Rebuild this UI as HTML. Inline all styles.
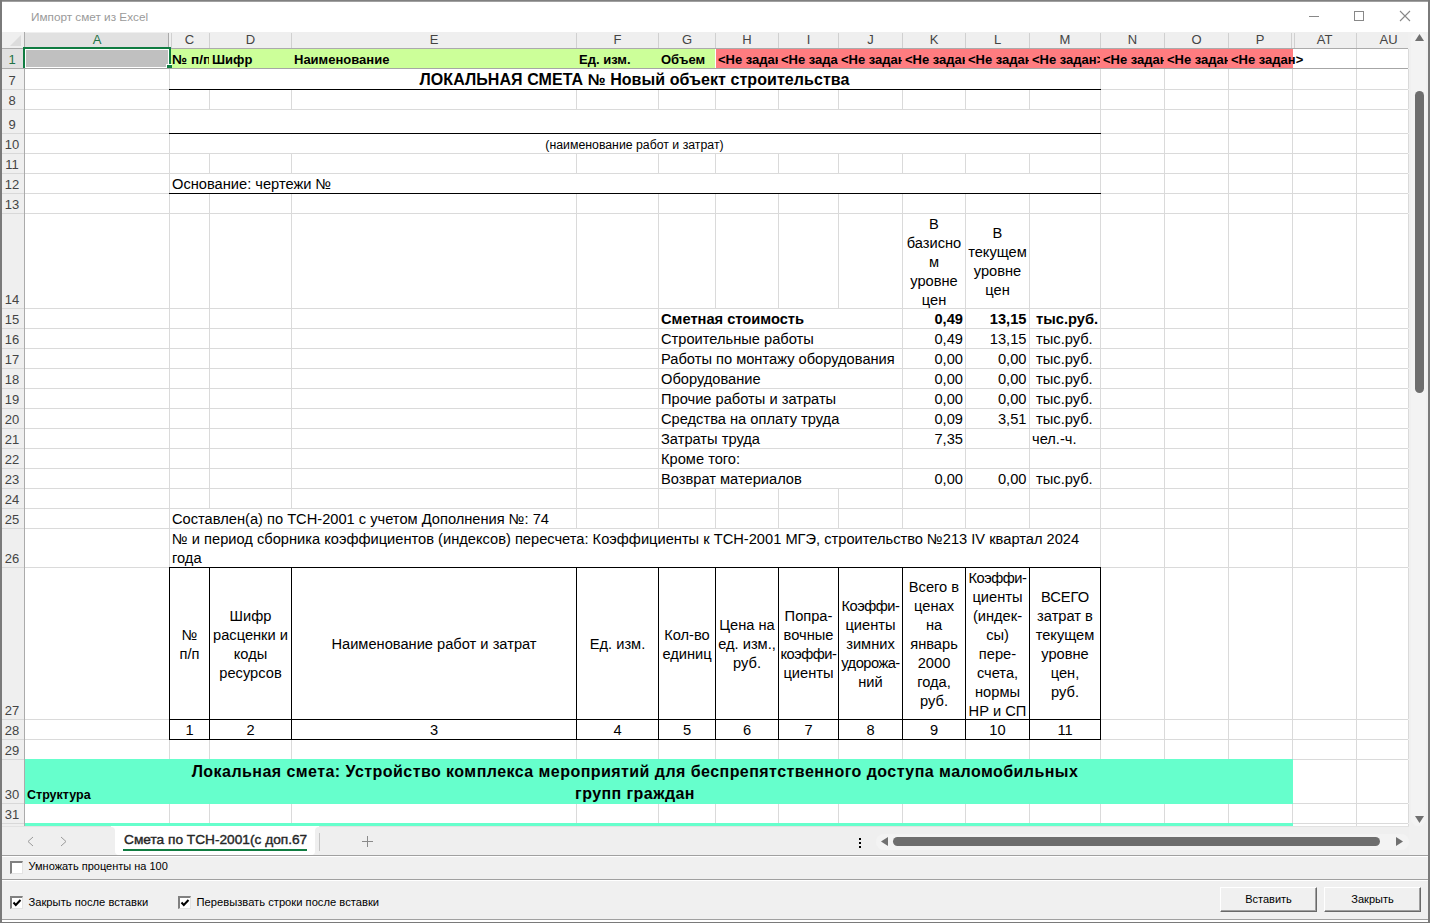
<!DOCTYPE html><html><head><meta charset="utf-8"><style>html,body{margin:0;padding:0}body{width:1430px;height:923px;position:relative;overflow:hidden;background:#f0f0f0;font-family:"Liberation Sans",sans-serif}div{position:absolute;box-sizing:border-box}</style></head><body>
<div style="left:2px;top:1px;width:1426px;height:31px;background:#ffffff;"></div>
<div style="left:24px;top:48px;width:1384px;height:778px;background:#ffffff;"></div>
<div style="left:2px;top:32px;width:1406px;height:16px;background:#efefef;"></div>
<div style="left:2px;top:48px;width:22px;height:778px;background:#efefef;"></div>
<div style="left:170px;top:49px;width:545px;height:19px;background:#ccff99;"></div>
<div style="left:716px;top:49px;width:577px;height:19px;background:#ff7c80;"></div>
<div style="left:25px;top:68px;width:1383px;height:1px;background:#a6a6a6;"></div>
<div style="left:25px;top:89px;width:1383px;height:1px;background:#dadada;"></div>
<div style="left:25px;top:109px;width:1383px;height:1px;background:#dadada;"></div>
<div style="left:25px;top:133px;width:1383px;height:1px;background:#dadada;"></div>
<div style="left:25px;top:153px;width:1383px;height:1px;background:#dadada;"></div>
<div style="left:25px;top:173px;width:1383px;height:1px;background:#dadada;"></div>
<div style="left:25px;top:193px;width:1383px;height:1px;background:#dadada;"></div>
<div style="left:25px;top:213px;width:1383px;height:1px;background:#dadada;"></div>
<div style="left:25px;top:308px;width:1383px;height:1px;background:#dadada;"></div>
<div style="left:25px;top:328px;width:1383px;height:1px;background:#dadada;"></div>
<div style="left:25px;top:348px;width:1383px;height:1px;background:#dadada;"></div>
<div style="left:25px;top:368px;width:1383px;height:1px;background:#dadada;"></div>
<div style="left:25px;top:388px;width:1383px;height:1px;background:#dadada;"></div>
<div style="left:25px;top:408px;width:1383px;height:1px;background:#dadada;"></div>
<div style="left:25px;top:428px;width:1383px;height:1px;background:#dadada;"></div>
<div style="left:25px;top:448px;width:1383px;height:1px;background:#dadada;"></div>
<div style="left:25px;top:468px;width:1383px;height:1px;background:#dadada;"></div>
<div style="left:25px;top:488px;width:1383px;height:1px;background:#dadada;"></div>
<div style="left:25px;top:508px;width:1383px;height:1px;background:#dadada;"></div>
<div style="left:25px;top:528px;width:1383px;height:1px;background:#dadada;"></div>
<div style="left:25px;top:567px;width:1383px;height:1px;background:#dadada;"></div>
<div style="left:25px;top:719px;width:1383px;height:1px;background:#dadada;"></div>
<div style="left:25px;top:739px;width:1383px;height:1px;background:#dadada;"></div>
<div style="left:25px;top:759px;width:1383px;height:1px;background:#dadada;"></div>
<div style="left:25px;top:803px;width:1383px;height:1px;background:#dadada;"></div>
<div style="left:25px;top:823px;width:1383px;height:1px;background:#dadada;"></div>
<div style="left:1356px;top:49px;width:1px;height:19px;background:#dadada;"></div>
<div style="left:1408px;top:49px;width:1px;height:19px;background:#dadada;"></div>
<div style="left:169px;top:69px;width:1px;height:20px;background:#dadada;"></div>
<div style="left:1100px;top:69px;width:1px;height:20px;background:#dadada;"></div>
<div style="left:1164px;top:69px;width:1px;height:20px;background:#dadada;"></div>
<div style="left:1228px;top:69px;width:1px;height:20px;background:#dadada;"></div>
<div style="left:1292px;top:69px;width:1px;height:20px;background:#dadada;"></div>
<div style="left:1356px;top:69px;width:1px;height:20px;background:#dadada;"></div>
<div style="left:1408px;top:69px;width:1px;height:20px;background:#dadada;"></div>
<div style="left:169px;top:90px;width:1px;height:19px;background:#dadada;"></div>
<div style="left:209px;top:90px;width:1px;height:19px;background:#dadada;"></div>
<div style="left:291px;top:90px;width:1px;height:19px;background:#dadada;"></div>
<div style="left:576px;top:90px;width:1px;height:19px;background:#dadada;"></div>
<div style="left:658px;top:90px;width:1px;height:19px;background:#dadada;"></div>
<div style="left:715px;top:90px;width:1px;height:19px;background:#dadada;"></div>
<div style="left:778px;top:90px;width:1px;height:19px;background:#dadada;"></div>
<div style="left:838px;top:90px;width:1px;height:19px;background:#dadada;"></div>
<div style="left:902px;top:90px;width:1px;height:19px;background:#dadada;"></div>
<div style="left:965px;top:90px;width:1px;height:19px;background:#dadada;"></div>
<div style="left:1029px;top:90px;width:1px;height:19px;background:#dadada;"></div>
<div style="left:1100px;top:90px;width:1px;height:19px;background:#dadada;"></div>
<div style="left:1164px;top:90px;width:1px;height:19px;background:#dadada;"></div>
<div style="left:1228px;top:90px;width:1px;height:19px;background:#dadada;"></div>
<div style="left:1292px;top:90px;width:1px;height:19px;background:#dadada;"></div>
<div style="left:1356px;top:90px;width:1px;height:19px;background:#dadada;"></div>
<div style="left:1408px;top:90px;width:1px;height:19px;background:#dadada;"></div>
<div style="left:169px;top:110px;width:1px;height:23px;background:#dadada;"></div>
<div style="left:1100px;top:110px;width:1px;height:23px;background:#dadada;"></div>
<div style="left:1164px;top:110px;width:1px;height:23px;background:#dadada;"></div>
<div style="left:1228px;top:110px;width:1px;height:23px;background:#dadada;"></div>
<div style="left:1292px;top:110px;width:1px;height:23px;background:#dadada;"></div>
<div style="left:1356px;top:110px;width:1px;height:23px;background:#dadada;"></div>
<div style="left:1408px;top:110px;width:1px;height:23px;background:#dadada;"></div>
<div style="left:169px;top:134px;width:1px;height:19px;background:#dadada;"></div>
<div style="left:1100px;top:134px;width:1px;height:19px;background:#dadada;"></div>
<div style="left:1164px;top:134px;width:1px;height:19px;background:#dadada;"></div>
<div style="left:1228px;top:134px;width:1px;height:19px;background:#dadada;"></div>
<div style="left:1292px;top:134px;width:1px;height:19px;background:#dadada;"></div>
<div style="left:1356px;top:134px;width:1px;height:19px;background:#dadada;"></div>
<div style="left:1408px;top:134px;width:1px;height:19px;background:#dadada;"></div>
<div style="left:169px;top:154px;width:1px;height:19px;background:#dadada;"></div>
<div style="left:209px;top:154px;width:1px;height:19px;background:#dadada;"></div>
<div style="left:291px;top:154px;width:1px;height:19px;background:#dadada;"></div>
<div style="left:576px;top:154px;width:1px;height:19px;background:#dadada;"></div>
<div style="left:658px;top:154px;width:1px;height:19px;background:#dadada;"></div>
<div style="left:715px;top:154px;width:1px;height:19px;background:#dadada;"></div>
<div style="left:778px;top:154px;width:1px;height:19px;background:#dadada;"></div>
<div style="left:838px;top:154px;width:1px;height:19px;background:#dadada;"></div>
<div style="left:902px;top:154px;width:1px;height:19px;background:#dadada;"></div>
<div style="left:965px;top:154px;width:1px;height:19px;background:#dadada;"></div>
<div style="left:1029px;top:154px;width:1px;height:19px;background:#dadada;"></div>
<div style="left:1100px;top:154px;width:1px;height:19px;background:#dadada;"></div>
<div style="left:1164px;top:154px;width:1px;height:19px;background:#dadada;"></div>
<div style="left:1228px;top:154px;width:1px;height:19px;background:#dadada;"></div>
<div style="left:1292px;top:154px;width:1px;height:19px;background:#dadada;"></div>
<div style="left:1356px;top:154px;width:1px;height:19px;background:#dadada;"></div>
<div style="left:1408px;top:154px;width:1px;height:19px;background:#dadada;"></div>
<div style="left:169px;top:174px;width:1px;height:19px;background:#dadada;"></div>
<div style="left:1100px;top:174px;width:1px;height:19px;background:#dadada;"></div>
<div style="left:1164px;top:174px;width:1px;height:19px;background:#dadada;"></div>
<div style="left:1228px;top:174px;width:1px;height:19px;background:#dadada;"></div>
<div style="left:1292px;top:174px;width:1px;height:19px;background:#dadada;"></div>
<div style="left:1356px;top:174px;width:1px;height:19px;background:#dadada;"></div>
<div style="left:1408px;top:174px;width:1px;height:19px;background:#dadada;"></div>
<div style="left:169px;top:194px;width:1px;height:19px;background:#dadada;"></div>
<div style="left:209px;top:194px;width:1px;height:19px;background:#dadada;"></div>
<div style="left:291px;top:194px;width:1px;height:19px;background:#dadada;"></div>
<div style="left:576px;top:194px;width:1px;height:19px;background:#dadada;"></div>
<div style="left:658px;top:194px;width:1px;height:19px;background:#dadada;"></div>
<div style="left:715px;top:194px;width:1px;height:19px;background:#dadada;"></div>
<div style="left:778px;top:194px;width:1px;height:19px;background:#dadada;"></div>
<div style="left:838px;top:194px;width:1px;height:19px;background:#dadada;"></div>
<div style="left:902px;top:194px;width:1px;height:19px;background:#dadada;"></div>
<div style="left:965px;top:194px;width:1px;height:19px;background:#dadada;"></div>
<div style="left:1029px;top:194px;width:1px;height:19px;background:#dadada;"></div>
<div style="left:1100px;top:194px;width:1px;height:19px;background:#dadada;"></div>
<div style="left:1164px;top:194px;width:1px;height:19px;background:#dadada;"></div>
<div style="left:1228px;top:194px;width:1px;height:19px;background:#dadada;"></div>
<div style="left:1292px;top:194px;width:1px;height:19px;background:#dadada;"></div>
<div style="left:1356px;top:194px;width:1px;height:19px;background:#dadada;"></div>
<div style="left:1408px;top:194px;width:1px;height:19px;background:#dadada;"></div>
<div style="left:169px;top:214px;width:1px;height:94px;background:#dadada;"></div>
<div style="left:209px;top:214px;width:1px;height:94px;background:#dadada;"></div>
<div style="left:291px;top:214px;width:1px;height:94px;background:#dadada;"></div>
<div style="left:576px;top:214px;width:1px;height:94px;background:#dadada;"></div>
<div style="left:658px;top:214px;width:1px;height:94px;background:#dadada;"></div>
<div style="left:715px;top:214px;width:1px;height:94px;background:#dadada;"></div>
<div style="left:778px;top:214px;width:1px;height:94px;background:#dadada;"></div>
<div style="left:838px;top:214px;width:1px;height:94px;background:#dadada;"></div>
<div style="left:902px;top:214px;width:1px;height:94px;background:#dadada;"></div>
<div style="left:965px;top:214px;width:1px;height:94px;background:#dadada;"></div>
<div style="left:1029px;top:214px;width:1px;height:94px;background:#dadada;"></div>
<div style="left:1100px;top:214px;width:1px;height:94px;background:#dadada;"></div>
<div style="left:1164px;top:214px;width:1px;height:94px;background:#dadada;"></div>
<div style="left:1228px;top:214px;width:1px;height:94px;background:#dadada;"></div>
<div style="left:1292px;top:214px;width:1px;height:94px;background:#dadada;"></div>
<div style="left:1356px;top:214px;width:1px;height:94px;background:#dadada;"></div>
<div style="left:1408px;top:214px;width:1px;height:94px;background:#dadada;"></div>
<div style="left:169px;top:309px;width:1px;height:19px;background:#dadada;"></div>
<div style="left:209px;top:309px;width:1px;height:19px;background:#dadada;"></div>
<div style="left:291px;top:309px;width:1px;height:19px;background:#dadada;"></div>
<div style="left:576px;top:309px;width:1px;height:19px;background:#dadada;"></div>
<div style="left:658px;top:309px;width:1px;height:19px;background:#dadada;"></div>
<div style="left:902px;top:309px;width:1px;height:19px;background:#dadada;"></div>
<div style="left:965px;top:309px;width:1px;height:19px;background:#dadada;"></div>
<div style="left:1029px;top:309px;width:1px;height:19px;background:#dadada;"></div>
<div style="left:1100px;top:309px;width:1px;height:19px;background:#dadada;"></div>
<div style="left:1164px;top:309px;width:1px;height:19px;background:#dadada;"></div>
<div style="left:1228px;top:309px;width:1px;height:19px;background:#dadada;"></div>
<div style="left:1292px;top:309px;width:1px;height:19px;background:#dadada;"></div>
<div style="left:1356px;top:309px;width:1px;height:19px;background:#dadada;"></div>
<div style="left:1408px;top:309px;width:1px;height:19px;background:#dadada;"></div>
<div style="left:169px;top:329px;width:1px;height:19px;background:#dadada;"></div>
<div style="left:209px;top:329px;width:1px;height:19px;background:#dadada;"></div>
<div style="left:291px;top:329px;width:1px;height:19px;background:#dadada;"></div>
<div style="left:576px;top:329px;width:1px;height:19px;background:#dadada;"></div>
<div style="left:658px;top:329px;width:1px;height:19px;background:#dadada;"></div>
<div style="left:902px;top:329px;width:1px;height:19px;background:#dadada;"></div>
<div style="left:965px;top:329px;width:1px;height:19px;background:#dadada;"></div>
<div style="left:1029px;top:329px;width:1px;height:19px;background:#dadada;"></div>
<div style="left:1100px;top:329px;width:1px;height:19px;background:#dadada;"></div>
<div style="left:1164px;top:329px;width:1px;height:19px;background:#dadada;"></div>
<div style="left:1228px;top:329px;width:1px;height:19px;background:#dadada;"></div>
<div style="left:1292px;top:329px;width:1px;height:19px;background:#dadada;"></div>
<div style="left:1356px;top:329px;width:1px;height:19px;background:#dadada;"></div>
<div style="left:1408px;top:329px;width:1px;height:19px;background:#dadada;"></div>
<div style="left:169px;top:349px;width:1px;height:19px;background:#dadada;"></div>
<div style="left:209px;top:349px;width:1px;height:19px;background:#dadada;"></div>
<div style="left:291px;top:349px;width:1px;height:19px;background:#dadada;"></div>
<div style="left:576px;top:349px;width:1px;height:19px;background:#dadada;"></div>
<div style="left:658px;top:349px;width:1px;height:19px;background:#dadada;"></div>
<div style="left:902px;top:349px;width:1px;height:19px;background:#dadada;"></div>
<div style="left:965px;top:349px;width:1px;height:19px;background:#dadada;"></div>
<div style="left:1029px;top:349px;width:1px;height:19px;background:#dadada;"></div>
<div style="left:1100px;top:349px;width:1px;height:19px;background:#dadada;"></div>
<div style="left:1164px;top:349px;width:1px;height:19px;background:#dadada;"></div>
<div style="left:1228px;top:349px;width:1px;height:19px;background:#dadada;"></div>
<div style="left:1292px;top:349px;width:1px;height:19px;background:#dadada;"></div>
<div style="left:1356px;top:349px;width:1px;height:19px;background:#dadada;"></div>
<div style="left:1408px;top:349px;width:1px;height:19px;background:#dadada;"></div>
<div style="left:169px;top:369px;width:1px;height:19px;background:#dadada;"></div>
<div style="left:209px;top:369px;width:1px;height:19px;background:#dadada;"></div>
<div style="left:291px;top:369px;width:1px;height:19px;background:#dadada;"></div>
<div style="left:576px;top:369px;width:1px;height:19px;background:#dadada;"></div>
<div style="left:658px;top:369px;width:1px;height:19px;background:#dadada;"></div>
<div style="left:902px;top:369px;width:1px;height:19px;background:#dadada;"></div>
<div style="left:965px;top:369px;width:1px;height:19px;background:#dadada;"></div>
<div style="left:1029px;top:369px;width:1px;height:19px;background:#dadada;"></div>
<div style="left:1100px;top:369px;width:1px;height:19px;background:#dadada;"></div>
<div style="left:1164px;top:369px;width:1px;height:19px;background:#dadada;"></div>
<div style="left:1228px;top:369px;width:1px;height:19px;background:#dadada;"></div>
<div style="left:1292px;top:369px;width:1px;height:19px;background:#dadada;"></div>
<div style="left:1356px;top:369px;width:1px;height:19px;background:#dadada;"></div>
<div style="left:1408px;top:369px;width:1px;height:19px;background:#dadada;"></div>
<div style="left:169px;top:389px;width:1px;height:19px;background:#dadada;"></div>
<div style="left:209px;top:389px;width:1px;height:19px;background:#dadada;"></div>
<div style="left:291px;top:389px;width:1px;height:19px;background:#dadada;"></div>
<div style="left:576px;top:389px;width:1px;height:19px;background:#dadada;"></div>
<div style="left:658px;top:389px;width:1px;height:19px;background:#dadada;"></div>
<div style="left:902px;top:389px;width:1px;height:19px;background:#dadada;"></div>
<div style="left:965px;top:389px;width:1px;height:19px;background:#dadada;"></div>
<div style="left:1029px;top:389px;width:1px;height:19px;background:#dadada;"></div>
<div style="left:1100px;top:389px;width:1px;height:19px;background:#dadada;"></div>
<div style="left:1164px;top:389px;width:1px;height:19px;background:#dadada;"></div>
<div style="left:1228px;top:389px;width:1px;height:19px;background:#dadada;"></div>
<div style="left:1292px;top:389px;width:1px;height:19px;background:#dadada;"></div>
<div style="left:1356px;top:389px;width:1px;height:19px;background:#dadada;"></div>
<div style="left:1408px;top:389px;width:1px;height:19px;background:#dadada;"></div>
<div style="left:169px;top:409px;width:1px;height:19px;background:#dadada;"></div>
<div style="left:209px;top:409px;width:1px;height:19px;background:#dadada;"></div>
<div style="left:291px;top:409px;width:1px;height:19px;background:#dadada;"></div>
<div style="left:576px;top:409px;width:1px;height:19px;background:#dadada;"></div>
<div style="left:658px;top:409px;width:1px;height:19px;background:#dadada;"></div>
<div style="left:902px;top:409px;width:1px;height:19px;background:#dadada;"></div>
<div style="left:965px;top:409px;width:1px;height:19px;background:#dadada;"></div>
<div style="left:1029px;top:409px;width:1px;height:19px;background:#dadada;"></div>
<div style="left:1100px;top:409px;width:1px;height:19px;background:#dadada;"></div>
<div style="left:1164px;top:409px;width:1px;height:19px;background:#dadada;"></div>
<div style="left:1228px;top:409px;width:1px;height:19px;background:#dadada;"></div>
<div style="left:1292px;top:409px;width:1px;height:19px;background:#dadada;"></div>
<div style="left:1356px;top:409px;width:1px;height:19px;background:#dadada;"></div>
<div style="left:1408px;top:409px;width:1px;height:19px;background:#dadada;"></div>
<div style="left:169px;top:429px;width:1px;height:19px;background:#dadada;"></div>
<div style="left:209px;top:429px;width:1px;height:19px;background:#dadada;"></div>
<div style="left:291px;top:429px;width:1px;height:19px;background:#dadada;"></div>
<div style="left:576px;top:429px;width:1px;height:19px;background:#dadada;"></div>
<div style="left:658px;top:429px;width:1px;height:19px;background:#dadada;"></div>
<div style="left:902px;top:429px;width:1px;height:19px;background:#dadada;"></div>
<div style="left:965px;top:429px;width:1px;height:19px;background:#dadada;"></div>
<div style="left:1029px;top:429px;width:1px;height:19px;background:#dadada;"></div>
<div style="left:1100px;top:429px;width:1px;height:19px;background:#dadada;"></div>
<div style="left:1164px;top:429px;width:1px;height:19px;background:#dadada;"></div>
<div style="left:1228px;top:429px;width:1px;height:19px;background:#dadada;"></div>
<div style="left:1292px;top:429px;width:1px;height:19px;background:#dadada;"></div>
<div style="left:1356px;top:429px;width:1px;height:19px;background:#dadada;"></div>
<div style="left:1408px;top:429px;width:1px;height:19px;background:#dadada;"></div>
<div style="left:169px;top:449px;width:1px;height:19px;background:#dadada;"></div>
<div style="left:209px;top:449px;width:1px;height:19px;background:#dadada;"></div>
<div style="left:291px;top:449px;width:1px;height:19px;background:#dadada;"></div>
<div style="left:576px;top:449px;width:1px;height:19px;background:#dadada;"></div>
<div style="left:658px;top:449px;width:1px;height:19px;background:#dadada;"></div>
<div style="left:902px;top:449px;width:1px;height:19px;background:#dadada;"></div>
<div style="left:965px;top:449px;width:1px;height:19px;background:#dadada;"></div>
<div style="left:1029px;top:449px;width:1px;height:19px;background:#dadada;"></div>
<div style="left:1100px;top:449px;width:1px;height:19px;background:#dadada;"></div>
<div style="left:1164px;top:449px;width:1px;height:19px;background:#dadada;"></div>
<div style="left:1228px;top:449px;width:1px;height:19px;background:#dadada;"></div>
<div style="left:1292px;top:449px;width:1px;height:19px;background:#dadada;"></div>
<div style="left:1356px;top:449px;width:1px;height:19px;background:#dadada;"></div>
<div style="left:1408px;top:449px;width:1px;height:19px;background:#dadada;"></div>
<div style="left:169px;top:469px;width:1px;height:19px;background:#dadada;"></div>
<div style="left:209px;top:469px;width:1px;height:19px;background:#dadada;"></div>
<div style="left:291px;top:469px;width:1px;height:19px;background:#dadada;"></div>
<div style="left:576px;top:469px;width:1px;height:19px;background:#dadada;"></div>
<div style="left:658px;top:469px;width:1px;height:19px;background:#dadada;"></div>
<div style="left:902px;top:469px;width:1px;height:19px;background:#dadada;"></div>
<div style="left:965px;top:469px;width:1px;height:19px;background:#dadada;"></div>
<div style="left:1029px;top:469px;width:1px;height:19px;background:#dadada;"></div>
<div style="left:1100px;top:469px;width:1px;height:19px;background:#dadada;"></div>
<div style="left:1164px;top:469px;width:1px;height:19px;background:#dadada;"></div>
<div style="left:1228px;top:469px;width:1px;height:19px;background:#dadada;"></div>
<div style="left:1292px;top:469px;width:1px;height:19px;background:#dadada;"></div>
<div style="left:1356px;top:469px;width:1px;height:19px;background:#dadada;"></div>
<div style="left:1408px;top:469px;width:1px;height:19px;background:#dadada;"></div>
<div style="left:169px;top:489px;width:1px;height:19px;background:#dadada;"></div>
<div style="left:209px;top:489px;width:1px;height:19px;background:#dadada;"></div>
<div style="left:291px;top:489px;width:1px;height:19px;background:#dadada;"></div>
<div style="left:576px;top:489px;width:1px;height:19px;background:#dadada;"></div>
<div style="left:658px;top:489px;width:1px;height:19px;background:#dadada;"></div>
<div style="left:715px;top:489px;width:1px;height:19px;background:#dadada;"></div>
<div style="left:778px;top:489px;width:1px;height:19px;background:#dadada;"></div>
<div style="left:838px;top:489px;width:1px;height:19px;background:#dadada;"></div>
<div style="left:902px;top:489px;width:1px;height:19px;background:#dadada;"></div>
<div style="left:965px;top:489px;width:1px;height:19px;background:#dadada;"></div>
<div style="left:1029px;top:489px;width:1px;height:19px;background:#dadada;"></div>
<div style="left:1100px;top:489px;width:1px;height:19px;background:#dadada;"></div>
<div style="left:1164px;top:489px;width:1px;height:19px;background:#dadada;"></div>
<div style="left:1228px;top:489px;width:1px;height:19px;background:#dadada;"></div>
<div style="left:1292px;top:489px;width:1px;height:19px;background:#dadada;"></div>
<div style="left:1356px;top:489px;width:1px;height:19px;background:#dadada;"></div>
<div style="left:1408px;top:489px;width:1px;height:19px;background:#dadada;"></div>
<div style="left:169px;top:509px;width:1px;height:19px;background:#dadada;"></div>
<div style="left:576px;top:509px;width:1px;height:19px;background:#dadada;"></div>
<div style="left:658px;top:509px;width:1px;height:19px;background:#dadada;"></div>
<div style="left:715px;top:509px;width:1px;height:19px;background:#dadada;"></div>
<div style="left:778px;top:509px;width:1px;height:19px;background:#dadada;"></div>
<div style="left:838px;top:509px;width:1px;height:19px;background:#dadada;"></div>
<div style="left:902px;top:509px;width:1px;height:19px;background:#dadada;"></div>
<div style="left:965px;top:509px;width:1px;height:19px;background:#dadada;"></div>
<div style="left:1029px;top:509px;width:1px;height:19px;background:#dadada;"></div>
<div style="left:1100px;top:509px;width:1px;height:19px;background:#dadada;"></div>
<div style="left:1164px;top:509px;width:1px;height:19px;background:#dadada;"></div>
<div style="left:1228px;top:509px;width:1px;height:19px;background:#dadada;"></div>
<div style="left:1292px;top:509px;width:1px;height:19px;background:#dadada;"></div>
<div style="left:1356px;top:509px;width:1px;height:19px;background:#dadada;"></div>
<div style="left:1408px;top:509px;width:1px;height:19px;background:#dadada;"></div>
<div style="left:169px;top:529px;width:1px;height:38px;background:#dadada;"></div>
<div style="left:1100px;top:529px;width:1px;height:38px;background:#dadada;"></div>
<div style="left:1164px;top:529px;width:1px;height:38px;background:#dadada;"></div>
<div style="left:1228px;top:529px;width:1px;height:38px;background:#dadada;"></div>
<div style="left:1292px;top:529px;width:1px;height:38px;background:#dadada;"></div>
<div style="left:1356px;top:529px;width:1px;height:38px;background:#dadada;"></div>
<div style="left:1408px;top:529px;width:1px;height:38px;background:#dadada;"></div>
<div style="left:169px;top:568px;width:1px;height:151px;background:#dadada;"></div>
<div style="left:209px;top:568px;width:1px;height:151px;background:#dadada;"></div>
<div style="left:291px;top:568px;width:1px;height:151px;background:#dadada;"></div>
<div style="left:576px;top:568px;width:1px;height:151px;background:#dadada;"></div>
<div style="left:658px;top:568px;width:1px;height:151px;background:#dadada;"></div>
<div style="left:715px;top:568px;width:1px;height:151px;background:#dadada;"></div>
<div style="left:778px;top:568px;width:1px;height:151px;background:#dadada;"></div>
<div style="left:838px;top:568px;width:1px;height:151px;background:#dadada;"></div>
<div style="left:902px;top:568px;width:1px;height:151px;background:#dadada;"></div>
<div style="left:965px;top:568px;width:1px;height:151px;background:#dadada;"></div>
<div style="left:1029px;top:568px;width:1px;height:151px;background:#dadada;"></div>
<div style="left:1100px;top:568px;width:1px;height:151px;background:#dadada;"></div>
<div style="left:1164px;top:568px;width:1px;height:151px;background:#dadada;"></div>
<div style="left:1228px;top:568px;width:1px;height:151px;background:#dadada;"></div>
<div style="left:1292px;top:568px;width:1px;height:151px;background:#dadada;"></div>
<div style="left:1356px;top:568px;width:1px;height:151px;background:#dadada;"></div>
<div style="left:1408px;top:568px;width:1px;height:151px;background:#dadada;"></div>
<div style="left:169px;top:720px;width:1px;height:19px;background:#dadada;"></div>
<div style="left:209px;top:720px;width:1px;height:19px;background:#dadada;"></div>
<div style="left:291px;top:720px;width:1px;height:19px;background:#dadada;"></div>
<div style="left:576px;top:720px;width:1px;height:19px;background:#dadada;"></div>
<div style="left:658px;top:720px;width:1px;height:19px;background:#dadada;"></div>
<div style="left:715px;top:720px;width:1px;height:19px;background:#dadada;"></div>
<div style="left:778px;top:720px;width:1px;height:19px;background:#dadada;"></div>
<div style="left:838px;top:720px;width:1px;height:19px;background:#dadada;"></div>
<div style="left:902px;top:720px;width:1px;height:19px;background:#dadada;"></div>
<div style="left:965px;top:720px;width:1px;height:19px;background:#dadada;"></div>
<div style="left:1029px;top:720px;width:1px;height:19px;background:#dadada;"></div>
<div style="left:1100px;top:720px;width:1px;height:19px;background:#dadada;"></div>
<div style="left:1164px;top:720px;width:1px;height:19px;background:#dadada;"></div>
<div style="left:1228px;top:720px;width:1px;height:19px;background:#dadada;"></div>
<div style="left:1292px;top:720px;width:1px;height:19px;background:#dadada;"></div>
<div style="left:1356px;top:720px;width:1px;height:19px;background:#dadada;"></div>
<div style="left:1408px;top:720px;width:1px;height:19px;background:#dadada;"></div>
<div style="left:169px;top:740px;width:1px;height:19px;background:#dadada;"></div>
<div style="left:209px;top:740px;width:1px;height:19px;background:#dadada;"></div>
<div style="left:291px;top:740px;width:1px;height:19px;background:#dadada;"></div>
<div style="left:576px;top:740px;width:1px;height:19px;background:#dadada;"></div>
<div style="left:658px;top:740px;width:1px;height:19px;background:#dadada;"></div>
<div style="left:715px;top:740px;width:1px;height:19px;background:#dadada;"></div>
<div style="left:778px;top:740px;width:1px;height:19px;background:#dadada;"></div>
<div style="left:838px;top:740px;width:1px;height:19px;background:#dadada;"></div>
<div style="left:902px;top:740px;width:1px;height:19px;background:#dadada;"></div>
<div style="left:965px;top:740px;width:1px;height:19px;background:#dadada;"></div>
<div style="left:1029px;top:740px;width:1px;height:19px;background:#dadada;"></div>
<div style="left:1100px;top:740px;width:1px;height:19px;background:#dadada;"></div>
<div style="left:1164px;top:740px;width:1px;height:19px;background:#dadada;"></div>
<div style="left:1228px;top:740px;width:1px;height:19px;background:#dadada;"></div>
<div style="left:1292px;top:740px;width:1px;height:19px;background:#dadada;"></div>
<div style="left:1356px;top:740px;width:1px;height:19px;background:#dadada;"></div>
<div style="left:1408px;top:740px;width:1px;height:19px;background:#dadada;"></div>
<div style="left:1356px;top:760px;width:1px;height:43px;background:#dadada;"></div>
<div style="left:1408px;top:760px;width:1px;height:43px;background:#dadada;"></div>
<div style="left:169px;top:804px;width:1px;height:19px;background:#dadada;"></div>
<div style="left:209px;top:804px;width:1px;height:19px;background:#dadada;"></div>
<div style="left:291px;top:804px;width:1px;height:19px;background:#dadada;"></div>
<div style="left:576px;top:804px;width:1px;height:19px;background:#dadada;"></div>
<div style="left:658px;top:804px;width:1px;height:19px;background:#dadada;"></div>
<div style="left:715px;top:804px;width:1px;height:19px;background:#dadada;"></div>
<div style="left:778px;top:804px;width:1px;height:19px;background:#dadada;"></div>
<div style="left:838px;top:804px;width:1px;height:19px;background:#dadada;"></div>
<div style="left:902px;top:804px;width:1px;height:19px;background:#dadada;"></div>
<div style="left:965px;top:804px;width:1px;height:19px;background:#dadada;"></div>
<div style="left:1029px;top:804px;width:1px;height:19px;background:#dadada;"></div>
<div style="left:1100px;top:804px;width:1px;height:19px;background:#dadada;"></div>
<div style="left:1164px;top:804px;width:1px;height:19px;background:#dadada;"></div>
<div style="left:1228px;top:804px;width:1px;height:19px;background:#dadada;"></div>
<div style="left:1292px;top:804px;width:1px;height:19px;background:#dadada;"></div>
<div style="left:1356px;top:804px;width:1px;height:19px;background:#dadada;"></div>
<div style="left:1408px;top:804px;width:1px;height:19px;background:#dadada;"></div>
<div style="left:169px;top:824px;width:1px;height:2px;background:#dadada;"></div>
<div style="left:209px;top:824px;width:1px;height:2px;background:#dadada;"></div>
<div style="left:291px;top:824px;width:1px;height:2px;background:#dadada;"></div>
<div style="left:576px;top:824px;width:1px;height:2px;background:#dadada;"></div>
<div style="left:658px;top:824px;width:1px;height:2px;background:#dadada;"></div>
<div style="left:715px;top:824px;width:1px;height:2px;background:#dadada;"></div>
<div style="left:778px;top:824px;width:1px;height:2px;background:#dadada;"></div>
<div style="left:838px;top:824px;width:1px;height:2px;background:#dadada;"></div>
<div style="left:902px;top:824px;width:1px;height:2px;background:#dadada;"></div>
<div style="left:965px;top:824px;width:1px;height:2px;background:#dadada;"></div>
<div style="left:1029px;top:824px;width:1px;height:2px;background:#dadada;"></div>
<div style="left:1100px;top:824px;width:1px;height:2px;background:#dadada;"></div>
<div style="left:1164px;top:824px;width:1px;height:2px;background:#dadada;"></div>
<div style="left:1228px;top:824px;width:1px;height:2px;background:#dadada;"></div>
<div style="left:1292px;top:824px;width:1px;height:2px;background:#dadada;"></div>
<div style="left:1356px;top:824px;width:1px;height:2px;background:#dadada;"></div>
<div style="left:1408px;top:824px;width:1px;height:2px;background:#dadada;"></div>
<div style="left:25px;top:759px;width:1268px;height:45px;background:#66ffcc;"></div>
<div style="left:25px;top:823px;width:1268px;height:3px;background:#66ffcc;"></div>
<div style="left:2px;top:826px;width:1407px;height:1px;background:#e2e2e2;"></div>
<div style="left:169px;top:89px;width:932px;height:1px;background:#000;"></div>
<div style="left:169px;top:133px;width:932px;height:1px;background:#000;"></div>
<div style="left:169px;top:193px;width:932px;height:1px;background:#000;"></div>
<div style="left:169px;top:567px;width:932px;height:1px;background:#000;"></div>
<div style="left:169px;top:719px;width:932px;height:1px;background:#000;"></div>
<div style="left:169px;top:739px;width:932px;height:1px;background:#000;"></div>
<div style="left:169px;top:567px;width:1px;height:173px;background:#000;"></div>
<div style="left:209px;top:567px;width:1px;height:173px;background:#000;"></div>
<div style="left:291px;top:567px;width:1px;height:173px;background:#000;"></div>
<div style="left:576px;top:567px;width:1px;height:173px;background:#000;"></div>
<div style="left:658px;top:567px;width:1px;height:173px;background:#000;"></div>
<div style="left:715px;top:567px;width:1px;height:173px;background:#000;"></div>
<div style="left:778px;top:567px;width:1px;height:173px;background:#000;"></div>
<div style="left:838px;top:567px;width:1px;height:173px;background:#000;"></div>
<div style="left:902px;top:567px;width:1px;height:173px;background:#000;"></div>
<div style="left:965px;top:567px;width:1px;height:173px;background:#000;"></div>
<div style="left:1029px;top:567px;width:1px;height:173px;background:#000;"></div>
<div style="left:1100px;top:567px;width:1px;height:173px;background:#000;"></div>
<div style="left:168px;top:33px;width:1px;height:15px;background:#d0d0d0;"></div>
<div style="left:171px;top:33px;width:1px;height:15px;background:#d0d0d0;"></div>
<div style="left:209px;top:33px;width:1px;height:15px;background:#d0d0d0;"></div>
<div style="left:291px;top:33px;width:1px;height:15px;background:#d0d0d0;"></div>
<div style="left:576px;top:33px;width:1px;height:15px;background:#d0d0d0;"></div>
<div style="left:658px;top:33px;width:1px;height:15px;background:#d0d0d0;"></div>
<div style="left:715px;top:33px;width:1px;height:15px;background:#d0d0d0;"></div>
<div style="left:778px;top:33px;width:1px;height:15px;background:#d0d0d0;"></div>
<div style="left:838px;top:33px;width:1px;height:15px;background:#d0d0d0;"></div>
<div style="left:902px;top:33px;width:1px;height:15px;background:#d0d0d0;"></div>
<div style="left:965px;top:33px;width:1px;height:15px;background:#d0d0d0;"></div>
<div style="left:1029px;top:33px;width:1px;height:15px;background:#d0d0d0;"></div>
<div style="left:1100px;top:33px;width:1px;height:15px;background:#d0d0d0;"></div>
<div style="left:1164px;top:33px;width:1px;height:15px;background:#d0d0d0;"></div>
<div style="left:1228px;top:33px;width:1px;height:15px;background:#d0d0d0;"></div>
<div style="left:1291px;top:33px;width:1px;height:15px;background:#d0d0d0;"></div>
<div style="left:1294px;top:33px;width:1px;height:15px;background:#d0d0d0;"></div>
<div style="left:1356px;top:33px;width:1px;height:15px;background:#d0d0d0;"></div>
<div style="left:25px;top:33px;width:143px;height:15px;background:#e1e1e1;"></div>
<div style="left:168px;top:33px;width:1px;height:15px;background:#a8a8a8;"></div>
<div style="left:2px;top:48px;width:1406px;height:1px;background:#ababab;"></div>
<div style="left:24px;top:32px;width:1px;height:794px;background:#ababab;"></div>
<svg style="position:absolute;left:8px;top:34px" width="14" height="13"><polygon points="13,1 13,12 2,12" fill="#dcdcdc"/></svg>
<div style="top:32.00px;font-size:13px;line-height:15px;color:#217346;white-space:pre;left:-403.0px;width:1000px;text-align:center;">A</div>
<div style="top:32.00px;font-size:13px;line-height:15px;color:#444444;white-space:pre;left:-310.5px;width:1000px;text-align:center;">C</div>
<div style="top:32.00px;font-size:13px;line-height:15px;color:#444444;white-space:pre;left:-249.5px;width:1000px;text-align:center;">D</div>
<div style="top:32.00px;font-size:13px;line-height:15px;color:#444444;white-space:pre;left:-66.0px;width:1000px;text-align:center;">E</div>
<div style="top:32.00px;font-size:13px;line-height:15px;color:#444444;white-space:pre;left:117.5px;width:1000px;text-align:center;">F</div>
<div style="top:32.00px;font-size:13px;line-height:15px;color:#444444;white-space:pre;left:187.0px;width:1000px;text-align:center;">G</div>
<div style="top:32.00px;font-size:13px;line-height:15px;color:#444444;white-space:pre;left:247.0px;width:1000px;text-align:center;">H</div>
<div style="top:32.00px;font-size:13px;line-height:15px;color:#444444;white-space:pre;left:308.5px;width:1000px;text-align:center;">I</div>
<div style="top:32.00px;font-size:13px;line-height:15px;color:#444444;white-space:pre;left:370.5px;width:1000px;text-align:center;">J</div>
<div style="top:32.00px;font-size:13px;line-height:15px;color:#444444;white-space:pre;left:434.0px;width:1000px;text-align:center;">K</div>
<div style="top:32.00px;font-size:13px;line-height:15px;color:#444444;white-space:pre;left:497.5px;width:1000px;text-align:center;">L</div>
<div style="top:32.00px;font-size:13px;line-height:15px;color:#444444;white-space:pre;left:565.0px;width:1000px;text-align:center;">M</div>
<div style="top:32.00px;font-size:13px;line-height:15px;color:#444444;white-space:pre;left:632.5px;width:1000px;text-align:center;">N</div>
<div style="top:32.00px;font-size:13px;line-height:15px;color:#444444;white-space:pre;left:696.5px;width:1000px;text-align:center;">O</div>
<div style="top:32.00px;font-size:13px;line-height:15px;color:#444444;white-space:pre;left:760.0px;width:1000px;text-align:center;">P</div>
<div style="top:32.00px;font-size:13px;line-height:15px;color:#444444;white-space:pre;left:824.5px;width:1000px;text-align:center;">AT</div>
<div style="top:32.00px;font-size:13px;line-height:15px;color:#444444;white-space:pre;left:888.5px;width:1000px;text-align:center;">AU</div>
<div style="left:2px;top:49px;width:22px;height:19px;background:#e1e1e1;"></div>
<div style="left:2px;top:68px;width:22px;height:1px;background:#ababab;"></div>
<div style="top:52.00px;font-size:13px;line-height:15px;color:#217346;white-space:pre;left:-488px;width:1000px;text-align:center;">1</div>
<div style="left:2px;top:89px;width:22px;height:1px;background:#d8d8d8;"></div>
<div style="top:73.00px;font-size:13px;line-height:15px;color:#444444;white-space:pre;left:-488px;width:1000px;text-align:center;">7</div>
<div style="left:2px;top:109px;width:22px;height:1px;background:#d8d8d8;"></div>
<div style="top:93.00px;font-size:13px;line-height:15px;color:#444444;white-space:pre;left:-488px;width:1000px;text-align:center;">8</div>
<div style="left:2px;top:133px;width:22px;height:1px;background:#d8d8d8;"></div>
<div style="top:117.00px;font-size:13px;line-height:15px;color:#444444;white-space:pre;left:-488px;width:1000px;text-align:center;">9</div>
<div style="left:2px;top:153px;width:22px;height:1px;background:#d8d8d8;"></div>
<div style="top:137.00px;font-size:13px;line-height:15px;color:#444444;white-space:pre;left:-488px;width:1000px;text-align:center;">10</div>
<div style="left:2px;top:173px;width:22px;height:1px;background:#d8d8d8;"></div>
<div style="top:157.00px;font-size:13px;line-height:15px;color:#444444;white-space:pre;left:-488px;width:1000px;text-align:center;">11</div>
<div style="left:2px;top:193px;width:22px;height:1px;background:#d8d8d8;"></div>
<div style="top:177.00px;font-size:13px;line-height:15px;color:#444444;white-space:pre;left:-488px;width:1000px;text-align:center;">12</div>
<div style="left:2px;top:213px;width:22px;height:1px;background:#d8d8d8;"></div>
<div style="top:197.00px;font-size:13px;line-height:15px;color:#444444;white-space:pre;left:-488px;width:1000px;text-align:center;">13</div>
<div style="left:2px;top:308px;width:22px;height:1px;background:#d8d8d8;"></div>
<div style="top:292.00px;font-size:13px;line-height:15px;color:#444444;white-space:pre;left:-488px;width:1000px;text-align:center;">14</div>
<div style="left:2px;top:328px;width:22px;height:1px;background:#d8d8d8;"></div>
<div style="top:312.00px;font-size:13px;line-height:15px;color:#444444;white-space:pre;left:-488px;width:1000px;text-align:center;">15</div>
<div style="left:2px;top:348px;width:22px;height:1px;background:#d8d8d8;"></div>
<div style="top:332.00px;font-size:13px;line-height:15px;color:#444444;white-space:pre;left:-488px;width:1000px;text-align:center;">16</div>
<div style="left:2px;top:368px;width:22px;height:1px;background:#d8d8d8;"></div>
<div style="top:352.00px;font-size:13px;line-height:15px;color:#444444;white-space:pre;left:-488px;width:1000px;text-align:center;">17</div>
<div style="left:2px;top:388px;width:22px;height:1px;background:#d8d8d8;"></div>
<div style="top:372.00px;font-size:13px;line-height:15px;color:#444444;white-space:pre;left:-488px;width:1000px;text-align:center;">18</div>
<div style="left:2px;top:408px;width:22px;height:1px;background:#d8d8d8;"></div>
<div style="top:392.00px;font-size:13px;line-height:15px;color:#444444;white-space:pre;left:-488px;width:1000px;text-align:center;">19</div>
<div style="left:2px;top:428px;width:22px;height:1px;background:#d8d8d8;"></div>
<div style="top:412.00px;font-size:13px;line-height:15px;color:#444444;white-space:pre;left:-488px;width:1000px;text-align:center;">20</div>
<div style="left:2px;top:448px;width:22px;height:1px;background:#d8d8d8;"></div>
<div style="top:432.00px;font-size:13px;line-height:15px;color:#444444;white-space:pre;left:-488px;width:1000px;text-align:center;">21</div>
<div style="left:2px;top:468px;width:22px;height:1px;background:#d8d8d8;"></div>
<div style="top:452.00px;font-size:13px;line-height:15px;color:#444444;white-space:pre;left:-488px;width:1000px;text-align:center;">22</div>
<div style="left:2px;top:488px;width:22px;height:1px;background:#d8d8d8;"></div>
<div style="top:472.00px;font-size:13px;line-height:15px;color:#444444;white-space:pre;left:-488px;width:1000px;text-align:center;">23</div>
<div style="left:2px;top:508px;width:22px;height:1px;background:#d8d8d8;"></div>
<div style="top:492.00px;font-size:13px;line-height:15px;color:#444444;white-space:pre;left:-488px;width:1000px;text-align:center;">24</div>
<div style="left:2px;top:528px;width:22px;height:1px;background:#d8d8d8;"></div>
<div style="top:512.00px;font-size:13px;line-height:15px;color:#444444;white-space:pre;left:-488px;width:1000px;text-align:center;">25</div>
<div style="left:2px;top:567px;width:22px;height:1px;background:#d8d8d8;"></div>
<div style="top:551.00px;font-size:13px;line-height:15px;color:#444444;white-space:pre;left:-488px;width:1000px;text-align:center;">26</div>
<div style="left:2px;top:719px;width:22px;height:1px;background:#d8d8d8;"></div>
<div style="top:703.00px;font-size:13px;line-height:15px;color:#444444;white-space:pre;left:-488px;width:1000px;text-align:center;">27</div>
<div style="left:2px;top:739px;width:22px;height:1px;background:#d8d8d8;"></div>
<div style="top:723.00px;font-size:13px;line-height:15px;color:#444444;white-space:pre;left:-488px;width:1000px;text-align:center;">28</div>
<div style="left:2px;top:759px;width:22px;height:1px;background:#d8d8d8;"></div>
<div style="top:743.00px;font-size:13px;line-height:15px;color:#444444;white-space:pre;left:-488px;width:1000px;text-align:center;">29</div>
<div style="left:2px;top:803px;width:22px;height:1px;background:#d8d8d8;"></div>
<div style="top:787.00px;font-size:13px;line-height:15px;color:#444444;white-space:pre;left:-488px;width:1000px;text-align:center;">30</div>
<div style="left:2px;top:823px;width:22px;height:1px;background:#d8d8d8;"></div>
<div style="top:807.00px;font-size:13px;line-height:15px;color:#444444;white-space:pre;left:-488px;width:1000px;text-align:center;">31</div>
<div style="left:25px;top:49px;width:144px;height:19px;background:#ffffff;"></div>
<div style="left:26px;top:50px;width:142px;height:17px;background:#c0c0c0;"></div>
<div style="left:23px;top:47px;width:148px;height:2px;background:#107c41;"></div>
<div style="left:23px;top:47px;width:2px;height:21px;background:#107c41;"></div>
<div style="left:169px;top:47px;width:2px;height:17px;background:#107c41;"></div>
<div style="left:166px;top:64px;width:6px;height:4px;background:#ffffff;"></div>
<div style="left:167px;top:65px;width:5px;height:3px;background:#107c41;"></div>
<div style="left:170px;top:49px;width:39px;height:19px;overflow:hidden"><div style="left:2px;top:2.5px;font-size:13.5px;line-height:15px;font-weight:bold;white-space:pre;letter-spacing:0.1px">№ п/п</div></div>
<div style="left:210px;top:49px;width:81px;height:19px;overflow:hidden"><div style="left:2px;top:2.5px;font-size:13px;line-height:15px;font-weight:bold;white-space:pre;letter-spacing:0px">Шифр</div></div>
<div style="left:292px;top:49px;width:284px;height:19px;overflow:hidden"><div style="left:2px;top:2.5px;font-size:13px;line-height:15px;font-weight:bold;white-space:pre;letter-spacing:0px">Наименование</div></div>
<div style="left:577px;top:49px;width:81px;height:19px;overflow:hidden"><div style="left:2px;top:2.5px;font-size:13px;line-height:15px;font-weight:bold;white-space:pre;letter-spacing:0px">Ед. изм.</div></div>
<div style="left:659px;top:49px;width:56px;height:19px;overflow:hidden"><div style="left:2px;top:2.5px;font-size:13px;line-height:15px;font-weight:bold;white-space:pre;letter-spacing:0px">Объем</div></div>
<div style="left:716px;top:49px;width:62px;height:19px;overflow:hidden"><div style="left:2px;top:2.5px;font-size:13px;line-height:15px;font-weight:bold;white-space:pre;letter-spacing:0px">&lt;Не задан&gt;</div></div>
<div style="left:779px;top:49px;width:59px;height:19px;overflow:hidden"><div style="left:2px;top:2.5px;font-size:13px;line-height:15px;font-weight:bold;white-space:pre;letter-spacing:0px">&lt;Не задан&gt;</div></div>
<div style="left:839px;top:49px;width:63px;height:19px;overflow:hidden"><div style="left:2px;top:2.5px;font-size:13px;line-height:15px;font-weight:bold;white-space:pre;letter-spacing:0px">&lt;Не задан&gt;</div></div>
<div style="left:903px;top:49px;width:62px;height:19px;overflow:hidden"><div style="left:2px;top:2.5px;font-size:13px;line-height:15px;font-weight:bold;white-space:pre;letter-spacing:0px">&lt;Не задан&gt;</div></div>
<div style="left:966px;top:49px;width:63px;height:19px;overflow:hidden"><div style="left:2px;top:2.5px;font-size:13px;line-height:15px;font-weight:bold;white-space:pre;letter-spacing:0px">&lt;Не задан&gt;</div></div>
<div style="left:1030px;top:49px;width:70px;height:19px;overflow:hidden"><div style="left:2px;top:2.5px;font-size:13px;line-height:15px;font-weight:bold;white-space:pre;letter-spacing:0px">&lt;Не задан&gt;</div></div>
<div style="left:1101px;top:49px;width:63px;height:19px;overflow:hidden"><div style="left:2px;top:2.5px;font-size:13px;line-height:15px;font-weight:bold;white-space:pre;letter-spacing:0px">&lt;Не задан&gt;</div></div>
<div style="left:1165px;top:49px;width:63px;height:19px;overflow:hidden"><div style="left:2px;top:2.5px;font-size:13px;line-height:15px;font-weight:bold;white-space:pre;letter-spacing:0px">&lt;Не задан&gt;</div></div>
<div style="left:1229px;top:49px;width:179px;height:19px;overflow:hidden"><div style="left:2px;top:2.5px;font-size:13px;line-height:15px;font-weight:bold;white-space:pre;letter-spacing:0px">&lt;Не задан&gt;</div></div>
<div style="top:70.50px;font-size:16px;line-height:18px;color:#000;white-space:pre;font-weight:bold;letter-spacing:0.07px;left:134.5px;width:1000px;text-align:center;">ЛОКАЛЬНАЯ СМЕТА № Новый объект строительства</div>
<div style="top:138.00px;font-size:12.3px;line-height:14px;color:#000;white-space:pre;left:134.5px;width:1000px;text-align:center;">(наименование работ и затрат)</div>
<div style="top:175.50px;font-size:14.67px;line-height:17px;color:#000;white-space:pre;left:172px;">Основание: чертежи №</div>
<div style="top:215.50px;font-size:14.67px;line-height:17px;color:#000;white-space:pre;left:434px;width:1000px;text-align:center;">В</div>
<div style="top:234.50px;font-size:14.67px;line-height:17px;color:#000;white-space:pre;left:434px;width:1000px;text-align:center;">базисно</div>
<div style="top:253.50px;font-size:14.67px;line-height:17px;color:#000;white-space:pre;left:434px;width:1000px;text-align:center;">м</div>
<div style="top:272.50px;font-size:14.67px;line-height:17px;color:#000;white-space:pre;left:434px;width:1000px;text-align:center;">уровне</div>
<div style="top:291.50px;font-size:14.67px;line-height:17px;color:#000;white-space:pre;left:434px;width:1000px;text-align:center;">цен</div>
<div style="top:224.50px;font-size:14.67px;line-height:17px;color:#000;white-space:pre;left:497.5px;width:1000px;text-align:center;">В</div>
<div style="top:243.50px;font-size:14.67px;line-height:17px;color:#000;white-space:pre;left:497.5px;width:1000px;text-align:center;">текущем</div>
<div style="top:262.50px;font-size:14.67px;line-height:17px;color:#000;white-space:pre;left:497.5px;width:1000px;text-align:center;">уровне</div>
<div style="top:281.50px;font-size:14.67px;line-height:17px;color:#000;white-space:pre;left:497.5px;width:1000px;text-align:center;">цен</div>
<div style="top:310.50px;font-size:14.67px;line-height:17px;color:#000;white-space:pre;font-weight:bold;left:661px;">Сметная стоимость</div>
<div style="top:310.50px;font-size:14.67px;line-height:17px;color:#000;white-space:pre;font-weight:bold;right:467px;text-align:right;">0,49</div>
<div style="top:310.50px;font-size:14.67px;line-height:17px;color:#000;white-space:pre;font-weight:bold;right:403.5px;text-align:right;">13,15</div>
<div style="top:310.50px;font-size:14.67px;line-height:17px;color:#000;white-space:pre;font-weight:bold;left:1032px;"> тыс.руб.</div>
<div style="top:330.50px;font-size:14.67px;line-height:17px;color:#000;white-space:pre;left:661px;">Строительные работы</div>
<div style="top:330.50px;font-size:14.67px;line-height:17px;color:#000;white-space:pre;right:467px;text-align:right;">0,49</div>
<div style="top:330.50px;font-size:14.67px;line-height:17px;color:#000;white-space:pre;right:403.5px;text-align:right;">13,15</div>
<div style="top:330.50px;font-size:14.67px;line-height:17px;color:#000;white-space:pre;left:1032px;"> тыс.руб.</div>
<div style="top:350.50px;font-size:14.67px;line-height:17px;color:#000;white-space:pre;left:661px;">Работы по монтажу оборудования</div>
<div style="top:350.50px;font-size:14.67px;line-height:17px;color:#000;white-space:pre;right:467px;text-align:right;">0,00</div>
<div style="top:350.50px;font-size:14.67px;line-height:17px;color:#000;white-space:pre;right:403.5px;text-align:right;">0,00</div>
<div style="top:350.50px;font-size:14.67px;line-height:17px;color:#000;white-space:pre;left:1032px;"> тыс.руб.</div>
<div style="top:370.50px;font-size:14.67px;line-height:17px;color:#000;white-space:pre;left:661px;">Оборудование</div>
<div style="top:370.50px;font-size:14.67px;line-height:17px;color:#000;white-space:pre;right:467px;text-align:right;">0,00</div>
<div style="top:370.50px;font-size:14.67px;line-height:17px;color:#000;white-space:pre;right:403.5px;text-align:right;">0,00</div>
<div style="top:370.50px;font-size:14.67px;line-height:17px;color:#000;white-space:pre;left:1032px;"> тыс.руб.</div>
<div style="top:390.50px;font-size:14.67px;line-height:17px;color:#000;white-space:pre;left:661px;">Прочие работы и затраты</div>
<div style="top:390.50px;font-size:14.67px;line-height:17px;color:#000;white-space:pre;right:467px;text-align:right;">0,00</div>
<div style="top:390.50px;font-size:14.67px;line-height:17px;color:#000;white-space:pre;right:403.5px;text-align:right;">0,00</div>
<div style="top:390.50px;font-size:14.67px;line-height:17px;color:#000;white-space:pre;left:1032px;"> тыс.руб.</div>
<div style="top:410.50px;font-size:14.67px;line-height:17px;color:#000;white-space:pre;left:661px;">Средства на оплату труда</div>
<div style="top:410.50px;font-size:14.67px;line-height:17px;color:#000;white-space:pre;right:467px;text-align:right;">0,09</div>
<div style="top:410.50px;font-size:14.67px;line-height:17px;color:#000;white-space:pre;right:403.5px;text-align:right;">3,51</div>
<div style="top:410.50px;font-size:14.67px;line-height:17px;color:#000;white-space:pre;left:1032px;"> тыс.руб.</div>
<div style="top:430.50px;font-size:14.67px;line-height:17px;color:#000;white-space:pre;left:661px;">Затраты труда</div>
<div style="top:430.50px;font-size:14.67px;line-height:17px;color:#000;white-space:pre;right:467px;text-align:right;">7,35</div>
<div style="top:430.50px;font-size:14.67px;line-height:17px;color:#000;white-space:pre;left:1032px;">чел.-ч.</div>
<div style="top:450.50px;font-size:14.67px;line-height:17px;color:#000;white-space:pre;left:661px;">Кроме того:</div>
<div style="top:470.50px;font-size:14.67px;line-height:17px;color:#000;white-space:pre;left:661px;">Возврат материалов</div>
<div style="top:470.50px;font-size:14.67px;line-height:17px;color:#000;white-space:pre;right:467px;text-align:right;">0,00</div>
<div style="top:470.50px;font-size:14.67px;line-height:17px;color:#000;white-space:pre;right:403.5px;text-align:right;">0,00</div>
<div style="top:470.50px;font-size:14.67px;line-height:17px;color:#000;white-space:pre;left:1032px;"> тыс.руб.</div>
<div style="top:510.50px;font-size:14.67px;line-height:17px;color:#000;white-space:pre;left:172px;">Составлен(а) по ТСН-2001 с учетом Дополнения №: 74</div>
<div style="top:530.50px;font-size:14.67px;line-height:17px;color:#000;white-space:pre;left:172px;">№ и период сборника коэффициентов (индексов) пересчета: Коэффициенты к ТСН-2001 МГЭ, строительство №213 IV квартал 2024</div>
<div style="top:549.50px;font-size:14.67px;line-height:17px;color:#000;white-space:pre;left:172px;">года</div>
<div style="top:626.50px;font-size:14.67px;line-height:17px;color:#000;white-space:pre;left:-310.5px;width:1000px;text-align:center;">№</div>
<div style="top:645.50px;font-size:14.67px;line-height:17px;color:#000;white-space:pre;left:-310.5px;width:1000px;text-align:center;">п/п</div>
<div style="top:607.50px;font-size:14.67px;line-height:17px;color:#000;white-space:pre;left:-249.5px;width:1000px;text-align:center;">Шифр</div>
<div style="top:626.50px;font-size:14.67px;line-height:17px;color:#000;white-space:pre;left:-249.5px;width:1000px;text-align:center;">расценки и</div>
<div style="top:645.50px;font-size:14.67px;line-height:17px;color:#000;white-space:pre;left:-249.5px;width:1000px;text-align:center;">коды</div>
<div style="top:664.50px;font-size:14.67px;line-height:17px;color:#000;white-space:pre;left:-249.5px;width:1000px;text-align:center;">ресурсов</div>
<div style="top:635.50px;font-size:14.67px;line-height:17px;color:#000;white-space:pre;left:-66.0px;width:1000px;text-align:center;">Наименование работ и затрат</div>
<div style="top:635.50px;font-size:14.67px;line-height:17px;color:#000;white-space:pre;left:117.5px;width:1000px;text-align:center;">Ед. изм.</div>
<div style="top:626.50px;font-size:14.67px;line-height:17px;color:#000;white-space:pre;left:187.0px;width:1000px;text-align:center;">Кол-во</div>
<div style="top:645.50px;font-size:14.67px;line-height:17px;color:#000;white-space:pre;left:187.0px;width:1000px;text-align:center;">единиц</div>
<div style="top:616.50px;font-size:14.67px;line-height:17px;color:#000;white-space:pre;left:247.0px;width:1000px;text-align:center;">Цена на</div>
<div style="top:635.50px;font-size:14.67px;line-height:17px;color:#000;white-space:pre;left:247.0px;width:1000px;text-align:center;">ед. изм.,</div>
<div style="top:654.50px;font-size:14.67px;line-height:17px;color:#000;white-space:pre;left:247.0px;width:1000px;text-align:center;">руб.</div>
<div style="top:607.50px;font-size:14.67px;line-height:17px;color:#000;white-space:pre;left:308.5px;width:1000px;text-align:center;">Попра-</div>
<div style="top:626.50px;font-size:14.67px;line-height:17px;color:#000;white-space:pre;left:308.5px;width:1000px;text-align:center;">вочные</div>
<div style="top:645.50px;font-size:14.67px;line-height:17px;color:#000;white-space:pre;letter-spacing:-0.5px;left:308.5px;width:1000px;text-align:center;">коэффи-</div>
<div style="top:664.50px;font-size:14.67px;line-height:17px;color:#000;white-space:pre;left:308.5px;width:1000px;text-align:center;">циенты</div>
<div style="top:597.50px;font-size:14.67px;line-height:17px;color:#000;white-space:pre;letter-spacing:-0.5px;left:370.5px;width:1000px;text-align:center;">Коэффи-</div>
<div style="top:616.50px;font-size:14.67px;line-height:17px;color:#000;white-space:pre;left:370.5px;width:1000px;text-align:center;">циенты</div>
<div style="top:635.50px;font-size:14.67px;line-height:17px;color:#000;white-space:pre;left:370.5px;width:1000px;text-align:center;">зимних</div>
<div style="top:654.50px;font-size:14.67px;line-height:17px;color:#000;white-space:pre;letter-spacing:-0.5px;left:370.5px;width:1000px;text-align:center;">удорожа-</div>
<div style="top:673.50px;font-size:14.67px;line-height:17px;color:#000;white-space:pre;left:370.5px;width:1000px;text-align:center;">ний</div>
<div style="top:578.50px;font-size:14.67px;line-height:17px;color:#000;white-space:pre;left:434.0px;width:1000px;text-align:center;">Всего в</div>
<div style="top:597.50px;font-size:14.67px;line-height:17px;color:#000;white-space:pre;left:434.0px;width:1000px;text-align:center;">ценах</div>
<div style="top:616.50px;font-size:14.67px;line-height:17px;color:#000;white-space:pre;left:434.0px;width:1000px;text-align:center;">на</div>
<div style="top:635.50px;font-size:14.67px;line-height:17px;color:#000;white-space:pre;left:434.0px;width:1000px;text-align:center;">январь</div>
<div style="top:654.50px;font-size:14.67px;line-height:17px;color:#000;white-space:pre;left:434.0px;width:1000px;text-align:center;">2000</div>
<div style="top:673.50px;font-size:14.67px;line-height:17px;color:#000;white-space:pre;left:434.0px;width:1000px;text-align:center;">года,</div>
<div style="top:692.50px;font-size:14.67px;line-height:17px;color:#000;white-space:pre;left:434.0px;width:1000px;text-align:center;">руб.</div>
<div style="top:569.50px;font-size:14.67px;line-height:17px;color:#000;white-space:pre;letter-spacing:-0.5px;left:497.5px;width:1000px;text-align:center;">Коэффи-</div>
<div style="top:588.50px;font-size:14.67px;line-height:17px;color:#000;white-space:pre;left:497.5px;width:1000px;text-align:center;">циенты</div>
<div style="top:607.50px;font-size:14.67px;line-height:17px;color:#000;white-space:pre;left:497.5px;width:1000px;text-align:center;">(индек-</div>
<div style="top:626.50px;font-size:14.67px;line-height:17px;color:#000;white-space:pre;left:497.5px;width:1000px;text-align:center;">сы)</div>
<div style="top:645.50px;font-size:14.67px;line-height:17px;color:#000;white-space:pre;left:497.5px;width:1000px;text-align:center;">пере-</div>
<div style="top:664.50px;font-size:14.67px;line-height:17px;color:#000;white-space:pre;left:497.5px;width:1000px;text-align:center;">счета,</div>
<div style="top:683.50px;font-size:14.67px;line-height:17px;color:#000;white-space:pre;left:497.5px;width:1000px;text-align:center;">нормы</div>
<div style="top:702.50px;font-size:14.67px;line-height:17px;color:#000;white-space:pre;left:497.5px;width:1000px;text-align:center;">НР и СП</div>
<div style="top:588.50px;font-size:14.67px;line-height:17px;color:#000;white-space:pre;left:565.0px;width:1000px;text-align:center;">ВСЕГО</div>
<div style="top:607.50px;font-size:14.67px;line-height:17px;color:#000;white-space:pre;left:565.0px;width:1000px;text-align:center;">затрат в</div>
<div style="top:626.50px;font-size:14.67px;line-height:17px;color:#000;white-space:pre;left:565.0px;width:1000px;text-align:center;">текущем</div>
<div style="top:645.50px;font-size:14.67px;line-height:17px;color:#000;white-space:pre;left:565.0px;width:1000px;text-align:center;">уровне</div>
<div style="top:664.50px;font-size:14.67px;line-height:17px;color:#000;white-space:pre;left:565.0px;width:1000px;text-align:center;">цен,</div>
<div style="top:683.50px;font-size:14.67px;line-height:17px;color:#000;white-space:pre;left:565.0px;width:1000px;text-align:center;">руб.</div>
<div style="top:721.50px;font-size:14.67px;line-height:17px;color:#000;white-space:pre;left:-310.5px;width:1000px;text-align:center;">1</div>
<div style="top:721.50px;font-size:14.67px;line-height:17px;color:#000;white-space:pre;left:-249.5px;width:1000px;text-align:center;">2</div>
<div style="top:721.50px;font-size:14.67px;line-height:17px;color:#000;white-space:pre;left:-66.0px;width:1000px;text-align:center;">3</div>
<div style="top:721.50px;font-size:14.67px;line-height:17px;color:#000;white-space:pre;left:117.5px;width:1000px;text-align:center;">4</div>
<div style="top:721.50px;font-size:14.67px;line-height:17px;color:#000;white-space:pre;left:187.0px;width:1000px;text-align:center;">5</div>
<div style="top:721.50px;font-size:14.67px;line-height:17px;color:#000;white-space:pre;left:247.0px;width:1000px;text-align:center;">6</div>
<div style="top:721.50px;font-size:14.67px;line-height:17px;color:#000;white-space:pre;left:308.5px;width:1000px;text-align:center;">7</div>
<div style="top:721.50px;font-size:14.67px;line-height:17px;color:#000;white-space:pre;left:370.5px;width:1000px;text-align:center;">8</div>
<div style="top:721.50px;font-size:14.67px;line-height:17px;color:#000;white-space:pre;left:434.0px;width:1000px;text-align:center;">9</div>
<div style="top:721.50px;font-size:14.67px;line-height:17px;color:#000;white-space:pre;left:497.5px;width:1000px;text-align:center;">10</div>
<div style="top:721.50px;font-size:14.67px;line-height:17px;color:#000;white-space:pre;left:565.0px;width:1000px;text-align:center;">11</div>
<div style="top:788.00px;font-size:12.5px;line-height:14px;color:#000;white-space:pre;font-weight:bold;left:27px;">Структура</div>
<div style="top:762.50px;font-size:16px;line-height:18px;color:#000;white-space:pre;font-weight:bold;letter-spacing:0.45px;left:135px;width:1000px;text-align:center;">Локальная смета: Устройство комплекса мероприятий для беспрепятственного доступа маломобильных</div>
<div style="top:784.50px;font-size:16px;line-height:18px;color:#000;white-space:pre;font-weight:bold;letter-spacing:0.43px;left:135px;width:1000px;text-align:center;">групп граждан</div>
<div style="top:9.50px;font-size:11.75px;line-height:14px;color:#9a9a9a;white-space:pre;left:31px;">Импорт смет из Excel</div>
<div style="left:1309px;top:16px;width:10px;height:1px;background:#888;"></div>
<div style="left:1354px;top:11px;width:10px;height:10px;background:transparent;border:1px solid #888;"></div>
<svg style="position:absolute;left:1399px;top:10px" width="12" height="12"><path d="M1 1 L11 11 M11 1 L1 11" stroke="#888" stroke-width="1.1"/></svg>
<div style="left:1409px;top:32px;width:19px;height:794px;background:#f0f0f0;"></div>
<div style="left:1411px;top:32px;width:15px;height:794px;background:#f3f3f3;border-radius:7px;"></div>
<svg style="position:absolute;left:1414px;top:33px" width="11" height="9"><polygon points="5.5,1 10,8 1,8" fill="#707070"/></svg>
<div style="left:1415px;top:91px;width:9px;height:302px;background:#6e6e6e;border-radius:4.5px;"></div>
<svg style="position:absolute;left:1414px;top:815px" width="11" height="9"><polygon points="1,1 10,1 5.5,8" fill="#707070"/></svg>
<div style="left:111px;top:826px;width:208px;height:29px;background:#ffffff;"></div>
<div style="left:2px;top:827px;width:113px;height:28px;background:#efefef;border-top-right-radius:4px;"></div>
<div style="left:315px;top:827px;width:1094px;height:28px;background:#efefef;border-top-left-radius:4px;"></div>
<div style="left:115px;top:850px;width:5px;height:5px;background:#efefef;"></div>
<div style="left:310px;top:850px;width:5px;height:5px;background:#efefef;"></div>
<svg style="position:absolute;left:26px;top:836px" width="10" height="12"><path d="M7 1 L2 5.5 L7 10" fill="none" stroke="#9a9a9a" stroke-width="1"/></svg>
<svg style="position:absolute;left:59px;top:836px" width="10" height="12"><path d="M2 1 L7 5.5 L2 10" fill="none" stroke="#9a9a9a" stroke-width="1"/></svg>
<div style="left:115px;top:826px;width:200px;height:29px;background:#ffffff;border-radius:0 0 4px 4px;"></div>
<div style="top:831.50px;font-size:13.7px;line-height:16px;color:#262626;white-space:pre;left:124px;-webkit-text-stroke:0.4px #262626;">Смета по ТСН-2001(с доп.67</div>
<div style="left:123px;top:849px;width:184px;height:2px;background:#107c41;"></div>
<div style="left:319px;top:833px;width:1px;height:18px;background:#c6c6c6;"></div>
<div style="left:362px;top:841px;width:11px;height:1px;background:#8a8a8a;"></div>
<div style="left:367px;top:836px;width:1px;height:11px;background:#8a8a8a;"></div>
<div style="left:859px;top:838px;width:2px;height:2px;background:#000;"></div>
<div style="left:859px;top:842px;width:2px;height:2px;background:#000;"></div>
<div style="left:859px;top:846px;width:2px;height:2px;background:#000;"></div>
<div style="left:876px;top:834px;width:533px;height:16px;background:#f3f3f3;border-radius:8px;"></div>
<svg style="position:absolute;left:880px;top:836px" width="9" height="11"><polygon points="8,1 8,10 1,5.5" fill="#707070"/></svg>
<div style="left:893px;top:837px;width:487px;height:9px;background:#6e6e6e;border-radius:4.5px;"></div>
<svg style="position:absolute;left:1395px;top:836px" width="9" height="11"><polygon points="1,1 1,10 8,5.5" fill="#707070"/></svg>
<div style="left:2px;top:855px;width:1426px;height:1px;background:#a0a0a0;"></div>
<div style="left:2px;top:856px;width:1426px;height:1px;background:#ffffff;"></div>
<div style="left:2px;top:879px;width:1426px;height:1px;background:#a0a0a0;"></div>
<div style="left:2px;top:880px;width:1426px;height:1px;background:#ffffff;"></div>
<div style="left:2px;top:919px;width:1426px;height:1px;background:#a0a0a0;"></div>
<div style="left:2px;top:920px;width:1426px;height:1px;background:#ffffff;"></div>
<div style="left:2px;top:921px;width:1426px;height:1px;background:#ffffff;"></div>
<div style="left:10px;top:861px;width:13px;height:13px;background:#fff;border-top:2px solid #808080;border-left:2px solid #808080;border-right:1px solid #e3e3e3;border-bottom:1px solid #e3e3e3"></div>
<div style="top:860.00px;font-size:11px;line-height:13px;color:#000;white-space:pre;left:28.5px;">Умножать проценты на 100</div>
<div style="left:10px;top:896px;width:13px;height:13px;background:#fff;border-top:2px solid #808080;border-left:2px solid #808080;border-right:1px solid #e3e3e3;border-bottom:1px solid #e3e3e3"></div>
<svg style="position:absolute;left:12px;top:898px" width="10" height="10"><path d="M1.5 4.5 L3.8 7 L8.5 2" fill="none" stroke="#000" stroke-width="2"/></svg>
<div style="top:895.50px;font-size:11.2px;line-height:13px;color:#000;white-space:pre;left:28.5px;">Закрыть после вставки</div>
<div style="left:178px;top:896px;width:13px;height:13px;background:#fff;border-top:2px solid #808080;border-left:2px solid #808080;border-right:1px solid #e3e3e3;border-bottom:1px solid #e3e3e3"></div>
<svg style="position:absolute;left:180px;top:898px" width="10" height="10"><path d="M1.5 4.5 L3.8 7 L8.5 2" fill="none" stroke="#000" stroke-width="2"/></svg>
<div style="top:895.50px;font-size:11.2px;line-height:13px;color:#000;white-space:pre;left:196.5px;">Перевызвать строки после вставки</div>
<div style="left:1220px;top:887px;width:97px;height:25px;background:#f0f0f0;border-top:1px solid #fff;border-left:1px solid #fff;border-right:1px solid #696969;border-bottom:1px solid #696969;box-shadow:inset -1px -1px 0 #a0a0a0"></div>
<div style="top:893.00px;font-size:11px;line-height:13px;color:#000;white-space:pre;left:768.5px;width:1000px;text-align:center;">Вставить</div>
<div style="left:1324px;top:887px;width:97px;height:25px;background:#f0f0f0;border-top:1px solid #fff;border-left:1px solid #fff;border-right:1px solid #696969;border-bottom:1px solid #696969;box-shadow:inset -1px -1px 0 #a0a0a0"></div>
<div style="top:893.00px;font-size:11px;line-height:13px;color:#000;white-space:pre;left:872.5px;width:1000px;text-align:center;">Закрыть</div>
<div style="left:0px;top:0px;width:1430px;height:1px;background:#808080;"></div>
<div style="left:0px;top:1px;width:1430px;height:1px;background:#a0a0a0;"></div>
<div style="left:0px;top:0px;width:2px;height:923px;background:#7a7a7a;"></div>
<div style="left:1428px;top:0px;width:2px;height:923px;background:#7a7a7a;"></div>
<div style="left:0px;top:922px;width:1430px;height:1px;background:#7a7a7a;"></div>
</body></html>
